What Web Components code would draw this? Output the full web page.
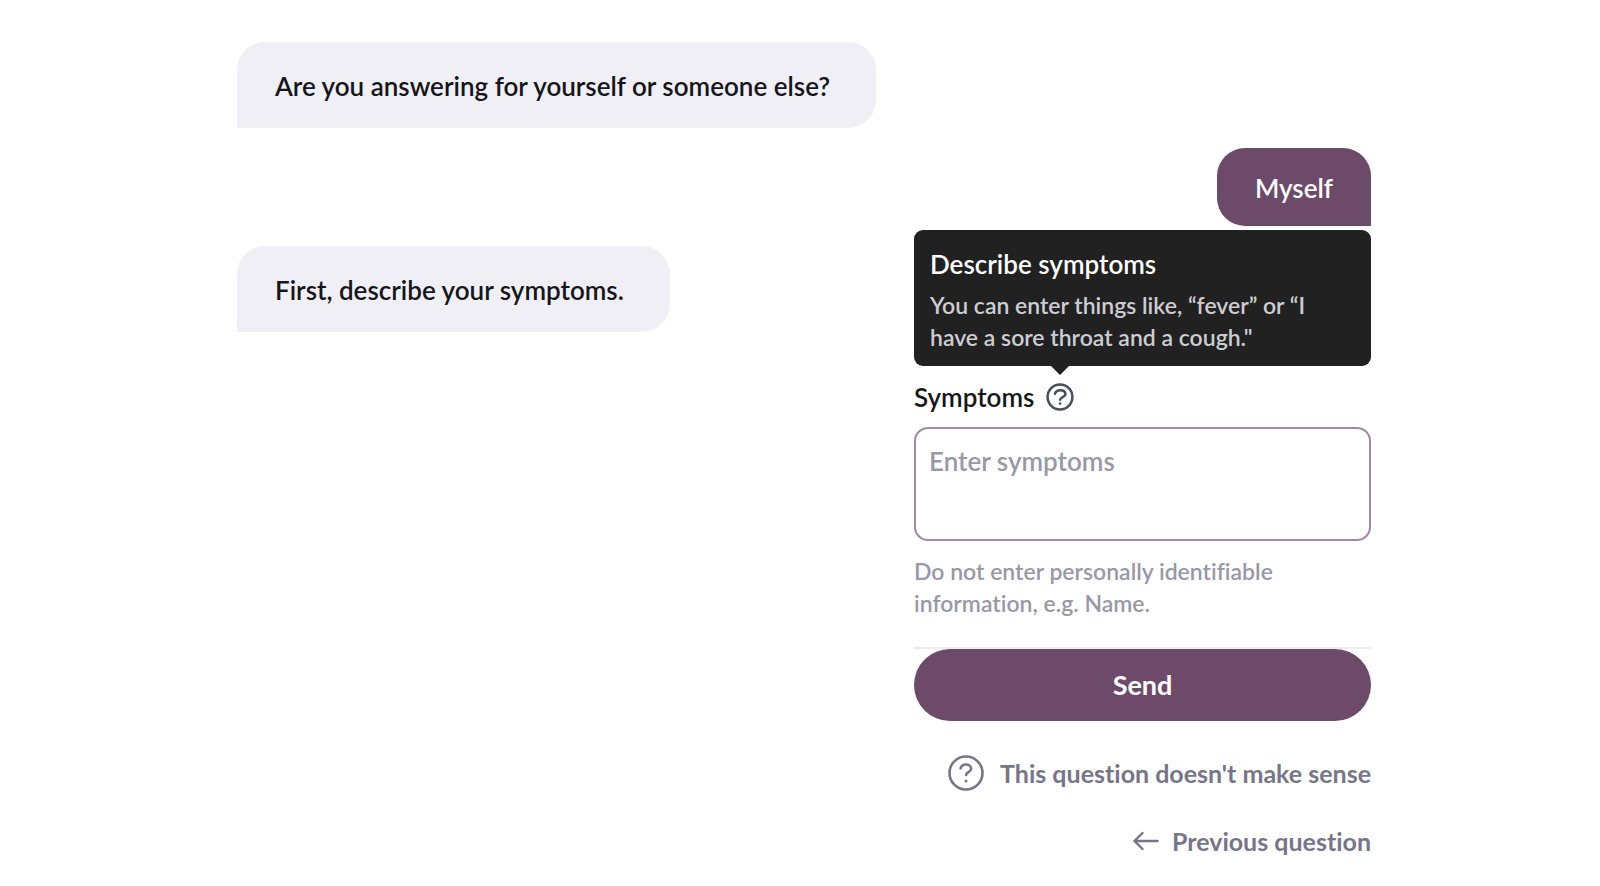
<!DOCTYPE html>
<html lang="en">
<head>
<meta charset="utf-8">
<meta name="viewport" content="width=device-width, initial-scale=1">
<title>Symptom checker</title>
<style>
  :root {
    --plum: #6d4a69;
    --ink: #16161a;
    --muted: #9998a6;
    --link: #777588;
    --bubble: #f0eff6;
    --tooltip: #212121;
  }
  body {
    margin: 0;
    background: #fff;
    color: var(--ink);
    font: 600 26px/32px Lato, "Open Sans", sans-serif;
    font-variant-ligatures: none;
  }
</style>
</head>
<body>
<chat-thread>
  <chat-bubble>Are you answering for yourself or someone else?</chat-bubble>
  <chat-bubble from="user">Myself</chat-bubble>
  <chat-bubble>First, describe your symptoms.</chat-bubble>
  <symptom-form>
    <info-tooltip slot="tooltip">
      <span slot="title">Describe symptoms</span>
      You can enter things like, “fever” or “I have a sore throat and a cough."
    </info-tooltip>
    <span slot="hint">Do not enter personally identifiable information, e.g. Name.</span>
  </symptom-form>
  <chat-actions></chat-actions>
</chat-thread>

<script>
  const define = (name, html) => {
    const template = document.createElement('template');
    template.innerHTML = html;
    customElements.define(name, class extends HTMLElement {
      constructor() {
        super();
        this.attachShadow({ mode: 'open' }).append(template.content.cloneNode(true));
      }
    });
  };

  define('help-icon', `
    <style>
      :host { display: block; }
      svg { display: block; width: 100%; height: 100%; fill: none; stroke: currentColor; stroke-linecap: round; stroke-linejoin: round; }
      .small, :host([size="small"]) .large { display: none; }
      :host([size="small"]) .small { display: block; }
    </style>
    <svg class="small" viewBox="0 0 28 28" stroke-width="2.5" aria-hidden="true">
      <circle cx="14" cy="14" r="12.4"/>
      <path d="M9 10.800C9.600 8.400 11.600 7.200 14.200 7.200c3 0 5.200 1.500 5.200 3.900 0 3.200-5.200 2.800-5.200 5.600"/>
      <circle cx="14.100" cy="20.600" r="1.300" fill="currentColor" stroke="none"/>
    </svg>
    <svg class="large" viewBox="0 0 36 36" stroke-width="2.600" aria-hidden="true">
      <circle cx="18" cy="18" r="16.500"/>
      <path d="M12.600 13.400c.6-2.500 2.600-3.900 5.300-3.900 3 0 5.200 1.700 5.200 4.200 0 3.700-5 3.100-5 6.300"/>
      <circle cx="18" cy="26" r="1.500" fill="currentColor" stroke="none"/>
    </svg>`);

  define('chat-thread', `
    <style>
      :host {
        display: flex;
        flex-direction: column;
        align-items: flex-start;
        gap: 20px;
        padding: 42px 229px 28px 237px;
      }
      ::slotted([from="user"]), ::slotted(symptom-form), ::slotted(chat-actions) { align-self: flex-end; }
      ::slotted(chat-actions) { margin-top: 14px; }
    </style>
    <slot></slot>`);

  define('chat-bubble', `
    <style>
      :host {
        display: block;
        padding: 28px 46px 26px 38px;
        border-radius: 28px 28px 28px 0;
        background: var(--bubble);
      }
      :host([from="user"]) {
        padding: 24px 38px 22px;
        border-radius: 28px 28px 0 28px;
        background: var(--plum);
        color: #fff;
      }
    </style>
    <slot></slot>`);

  define('info-tooltip', `
    <style>
      :host {
        display: block;
        box-sizing: border-box;
        padding: 18px 16px 13px;
        border-radius: 9px;
        background: var(--tooltip);
        color: #cdccd3;
        font-size: 23px;
      }
      .title { margin-bottom: 9px; color: #fff; font-size: 26px; }
    </style>
    <div class="title"><slot name="title"></slot></div>
    <div><slot></slot></div>`);

  define('symptom-form', `
    <style>
      :host { display: block; width: min(100%, 457px); padding-top: 29px; }
      form { display: flex; flex-direction: column; }
      .label { position: relative; display: flex; align-items: center; gap: 12px; }
      .tip { position: absolute; left: 0; right: 0; bottom: calc(100% + 15px); }
      .help {
        position: relative;
        width: 28px;
        height: 28px;
        padding: 0;
        border: 0;
        background: none;
        color: #474e5e;
      }
      .help::before {
        content: "";
        position: absolute;
        left: 50%;
        bottom: calc(100% + 8px);
        transform: translateX(-50%);
        border: 9px solid transparent;
        border-top-color: var(--tooltip);
        border-bottom: 0;
      }
      textarea {
        box-sizing: border-box;
        height: 114px;
        margin: 14px 0 0;
        padding: 16px 13px;
        border: 2px solid #a08a9f;
        border-radius: 14px;
        background: #fff;
        color: var(--ink);
        font: inherit;
        resize: none;
      }
      textarea::placeholder { color: var(--muted); opacity: 1; }
      .hint { margin: 14px 0 28px; color: var(--muted); font-size: 23px; }
      .submit { border-top: 2px solid #ececee; }
      .submit button {
        display: block;
        width: 100%;
        padding: 20px;
        border: 0;
        border-radius: 36px;
        background: var(--plum);
        color: #fff;
        font: inherit;
        font-size: 27px;
        font-weight: 700;
      }
    </style>
    <form>
      <div class="label">
        <label for="symptoms">Symptoms</label>
        <button class="help" type="button" aria-label="Help"><help-icon size="small"></help-icon></button>
        <div class="tip"><slot name="tooltip"></slot></div>
      </div>
      <textarea id="symptoms" placeholder="Enter symptoms"></textarea>
      <div class="hint"><slot name="hint"></slot></div>
      <div class="submit"><button type="button">Send</button></div>
    </form>`);

  define('chat-actions', `
    <style>
      :host { display: flex; flex-direction: column; align-items: flex-end; gap: 34px; }
      button {
        display: flex;
        align-items: center;
        padding: 0;
        border: 0;
        background: none;
        color: var(--link);
        font: inherit;
        font-size: 25px;
        font-weight: 700;
      }
      .unclear { gap: 16px; }
      .back { gap: 13px; }
      help-icon { width: 36px; height: 36px; }
      svg { width: 26px; height: 20px; fill: none; stroke: currentColor; stroke-width: 2.400; stroke-linecap: round; stroke-linejoin: round; }
    </style>
    <button class="unclear" type="button"><help-icon></help-icon>This question doesn't make sense</button>
    <button class="back" type="button">
      <svg viewBox="0 0 26 20" aria-hidden="true"><path d="M24.500 10H1.500M9.500 2l-8 8 8 8"/></svg>Previous question
    </button>`);
</script>
</body>
</html>
